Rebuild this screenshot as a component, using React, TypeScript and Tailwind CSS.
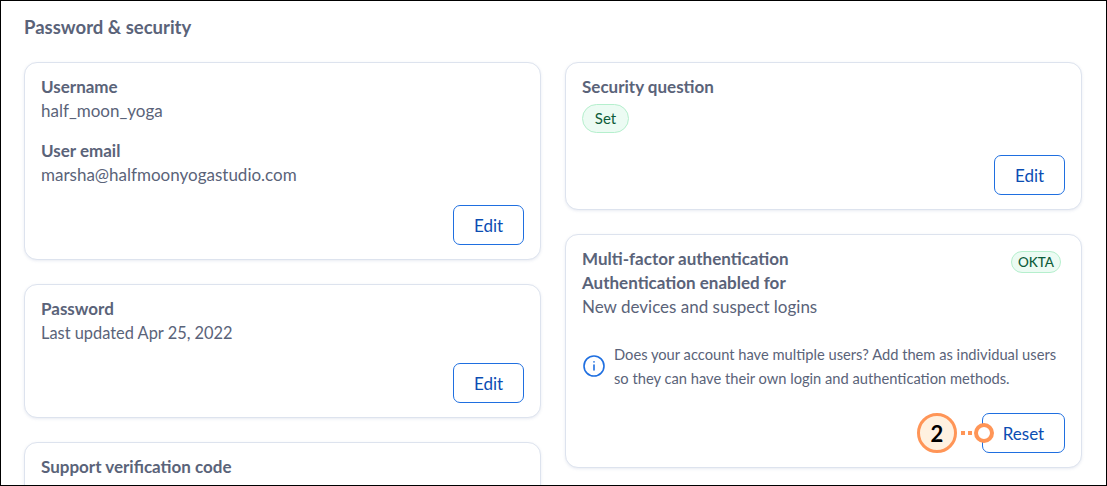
import { ReactNode } from "react"

function Card({ className, children }: { className: string; children: ReactNode }) {
  return (
    <div className={`rounded-[13px] border border-[#dde3ee] bg-white px-4 pt-3 shadow-[0_1px_3px_rgba(90,110,160,0.14)] ${className}`}>
      {children}
    </div>
  )
}

function OutlineButton({ label, width }: { label: string; width: string }) {
  return (
    <button className={`flex h-10 items-center justify-center rounded-[7px] border border-[#1f6fe0] bg-white pt-px text-[17px] text-[#0b4db3] ${width}`}>
      {label}
    </button>
  )
}

function Label({ children }: { children: ReactNode }) {
  return <div className="h-6 text-[17px] font-bold leading-6 text-[#5a6379]">{children}</div>
}

function Value({ children }: { children: ReactNode }) {
  return <div className="h-6 text-[17px] leading-6 text-[#5a6379]">{children}</div>
}

export default function App() {
  return (
    <div className="relative h-[486px] w-[1107px] overflow-hidden border border-black bg-white pl-[23px] pr-6 font-['Lato',sans-serif]">
      <h2 className="h-[61px] pt-[14px] text-[18.5px] font-bold leading-6 text-[#5a6379]">
        Password &amp; security
      </h2>
      <div className="flex gap-6">
        <div className="flex w-[517px] flex-col gap-6">
          <Card className="h-[198px]">
            <Label>Username</Label>
            <Value>half_moon_yoga</Value>
            <div className="mt-4">
              <Label>User email</Label>
              <Value>marsha@halfmoonyogastudio.com</Value>
            </div>
            <div className="mt-[18px] flex justify-end">
              <OutlineButton label="Edit" width="w-[71px]" />
            </div>
          </Card>
          <Card className="h-[134px]">
            <Label>Password</Label>
            <div className="h-6 text-[16.4px] leading-6 text-[#5a6379]">Last updated Apr 25, 2022</div>
            <div className="mt-[18px] flex justify-end">
              <OutlineButton label="Edit" width="w-[71px]" />
            </div>
          </Card>
          <Card className="h-[100px]">
            <Label>Support verification code</Label>
          </Card>
        </div>
        <div className="flex w-[517px] flex-col gap-6">
          <Card className="h-[148px]">
            <Label>Security question</Label>
            <div className="mt-[5px] flex h-[29px] w-[47px] items-center justify-center rounded-full border border-[#b5efcd] bg-[#ecfbf3] text-[15px] text-[#0d5c3a]">
              Set
            </div>
            <div className="mt-[22px] flex justify-end">
              <OutlineButton label="Edit" width="w-[71px]" />
            </div>
          </Card>
          <Card className="h-[234px]">
            <div className="flex justify-between">
              <div>
                <Label>Multi-factor authentication</Label>
                <Label>Authentication enabled for</Label>
                <Value>New devices and suspect logins</Value>
              </div>
              <div className="mr-1 mt-1 flex h-[22px] w-[50px] items-center justify-center rounded-full border border-[#b5efcd] bg-[#ecfbf3] text-[13.5px] font-medium text-[#0d5c3a]">
                OKTA
              </div>
            </div>
            <div className="mt-[23px] flex items-center gap-2">
              <svg width="24" height="24" viewBox="0 0 24 24" fill="none" stroke="#1f6fe0" strokeWidth="1.6" strokeLinecap="round" className="shrink-0">
                <circle cx="12" cy="12" r="10" />
                <path d="M12 11v5" />
                <path d="M12 7.8v.1" />
              </svg>
              <p className="whitespace-nowrap text-[14.7px] leading-6 text-[#5a6379]">
                Does your account have multiple users? Add them as individual users
                <br />
                so they can have their own login and authentication methods.
              </p>
            </div>
            <div className="mt-[23px] flex justify-end">
              <OutlineButton label="Reset" width="w-[83px]" />
            </div>
          </Card>
        </div>
      </div>

      {/* callout over the Reset button */}
      <div className="absolute left-[916px] top-[412px] flex h-10 items-center">
        <div className="flex size-10 items-center justify-center rounded-full border-[3px] border-[#ff9557] bg-[#fff1e0] text-[22px] font-bold text-black">
          2
        </div>
        <div className="ml-[4px] flex gap-[3px]">
          <span className="size-[4px] bg-[#ff9557]" />
          <span className="size-[4px] bg-[#ff9557]" />
        </div>
        <div className="ml-[2px] size-5 rounded-full border-[4px] border-[#ff9557] bg-white" />
      </div>
    </div>
  )
}
